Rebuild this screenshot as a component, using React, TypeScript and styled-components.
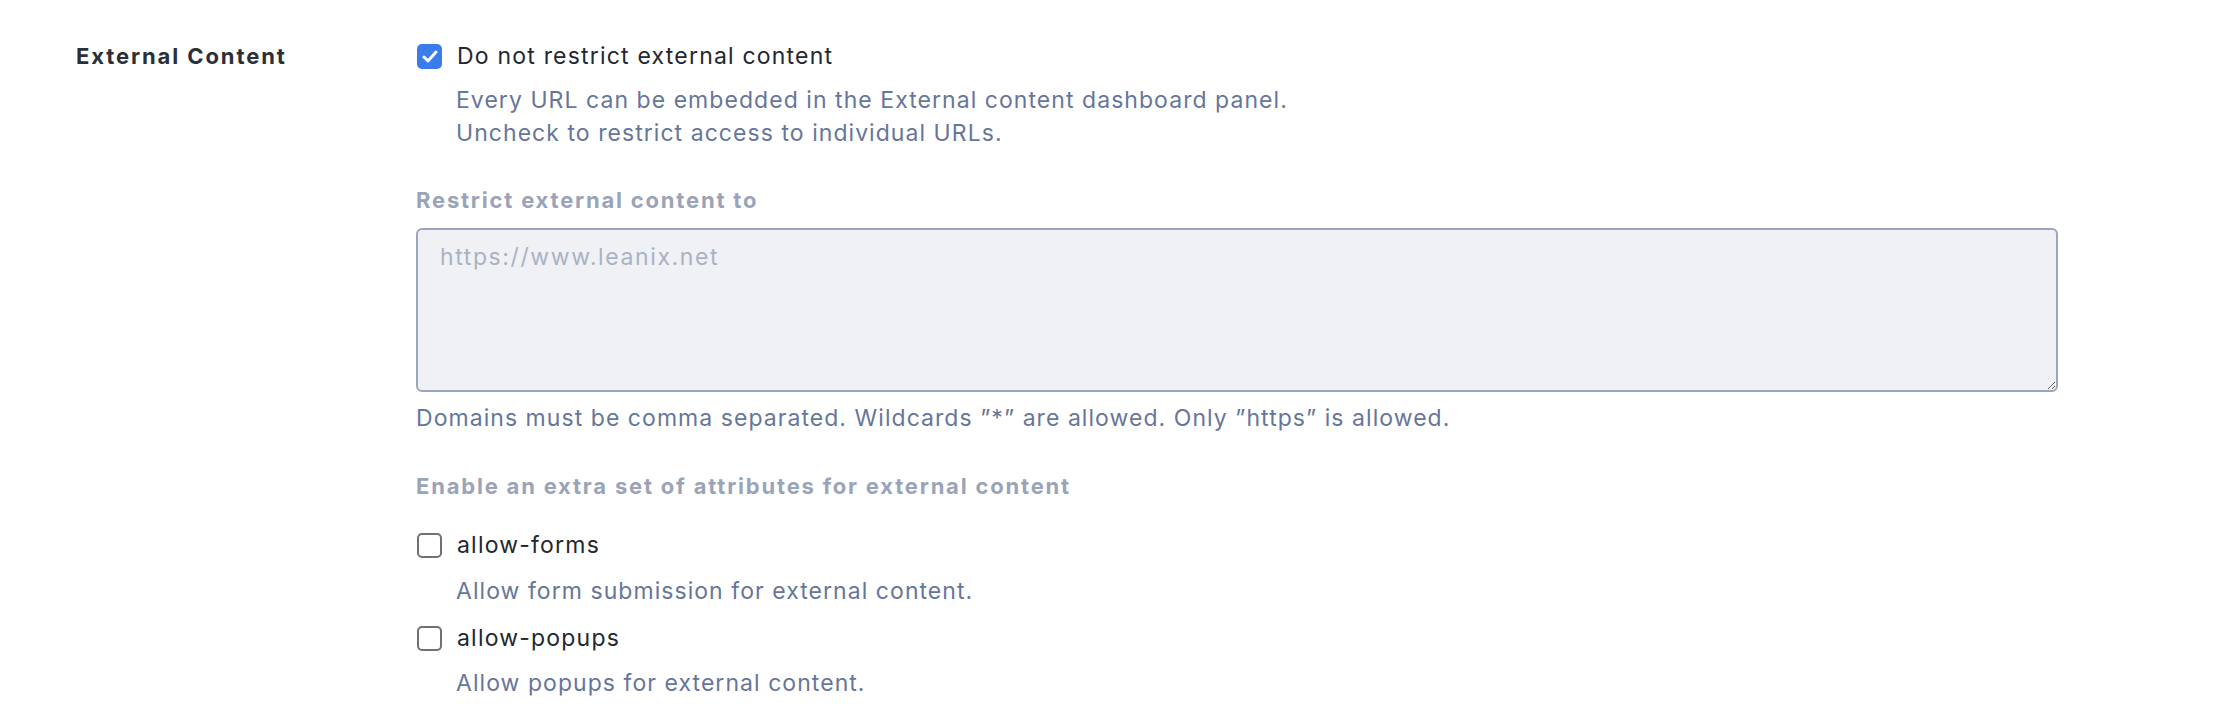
import React from 'react'
import styled, { createGlobalStyle } from 'styled-components'

const GlobalStyle = createGlobalStyle`
    html, body {
        margin: 0;
        padding: 0;
        background: #ffffff;
    }
    body {
        font-family: Inter, "Noto Sans", sans-serif;
        color: #262b35;
    }
`

const Page = styled.div`
    display: grid;
    grid-template-columns: 340px 1642px;
    padding: 40px 0 0 76px;
`

const SectionLabel = styled.div`
    font-size: 22px;
    font-weight: 700;
    line-height: 33px;
    letter-spacing: 1.9px;
    color: #2a2f3a;
`

const Content = styled.div`
    display: flex;
    flex-direction: column;
`

const CheckRow = styled.label<{ $top?: number }>`
    display: flex;
    align-items: center;
    gap: 15px;
    margin-top: ${p => p.$top ?? 0}px;
    font-size: 23px;
    line-height: 33px;
    letter-spacing: 1.2px;
    color: #23272f;
    cursor: pointer;
`

const Box = styled.span<{ $checked?: boolean }>`
    box-sizing: border-box;
    width: 25px;
    height: 25px;
    flex: none;
    margin-left: 1px;
    border-radius: 5px;
    display: flex;
    align-items: center;
    justify-content: center;
    background: ${p => (p.$checked ? '#3a7cee' : '#ffffff')};
    border: ${p => (p.$checked ? 'none' : '2px solid #6f7175')};
`

const Hint = styled.div<{ $top?: number; $indent?: boolean }>`
    margin-top: ${p => p.$top ?? 0}px;
    padding-left: ${p => (p.$indent ? 40 : 0)}px;
    font-size: 23px;
    line-height: 33px;
    letter-spacing: 1.05px;
    color: #66769a;
`

const FieldTitle = styled.div<{ $top?: number }>`
    margin-top: ${p => p.$top ?? 0}px;
    font-size: 22px;
    font-weight: 700;
    line-height: 33px;
    letter-spacing: 1.8px;
    color: #9aa4b8;
`

const TextArea = styled.textarea`
    box-sizing: border-box;
    margin-top: 11px;
    width: 1642px;
    height: 164px;
    padding: 11px 22px;
    border: 2px solid #9ba5bb;
    border-radius: 6px;
    background: #eff1f5;
    font-family: Inter, "Noto Sans", sans-serif;
    font-size: 23px;
    line-height: 33px;
    letter-spacing: 1.6px;
    color: #262b35;
    resize: vertical;
    outline: none;

    &::placeholder {
        color: #aab2c2;
    }
`

const Checkbox: React.FC<{ checked?: boolean }> = ({ checked }) => (
    <Box $checked={checked}>
        {checked && (
            <svg width="16" height="13" viewBox="0 0 16 13" fill="none">
                <path d="M2 7 L6 11 L14 2" stroke="#fff" strokeWidth="3" strokeLinecap="round" strokeLinejoin="round" />
            </svg>
        )}
    </Box>
)

const App: React.FC = () => {
    return (
        <>
            <GlobalStyle />
            <Page>
                <SectionLabel>External Content</SectionLabel>
                <Content>
                    <CheckRow>
                        <Checkbox checked />
                        Do not restrict external content
                    </CheckRow>
                    <Hint $indent $top={11}>
                        Every URL can be embedded in the External content dashboard panel.
                        <br />
                        Uncheck to restrict access to individual URLs.
                    </Hint>

                    <FieldTitle $top={34}>Restrict external content to</FieldTitle>
                    <TextArea placeholder="https://www.leanix.net" />
                    <Hint $top={10}>
                        Domains must be comma separated. Wildcards ”*” are allowed. Only ”https” is allowed.
                    </Hint>

                    <FieldTitle $top={35}>Enable an extra set of attributes for external content</FieldTitle>
                    <CheckRow $top={26}>
                        <Checkbox />
                        allow-forms
                    </CheckRow>
                    <Hint $indent $top={13}>Allow form submission for external content.</Hint>
                    <CheckRow $top={14}>
                        <Checkbox />
                        allow-popups
                    </CheckRow>
                    <Hint $indent $top={12}>Allow popups for external content.</Hint>
                </Content>
            </Page>
        </>
    )
}

export default App
